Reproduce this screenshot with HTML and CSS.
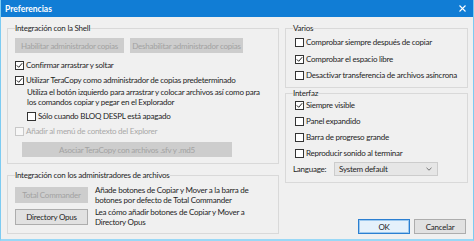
FILE: index.html
```html
<!DOCTYPE html>
<html lang="es">
<head>
<meta charset="utf-8">
<title>Preferencias</title>
<link rel="stylesheet" href="styles.css">
</head>
<body>
<div class="window">
  <div class="titlebar">
    <span class="title">Preferencias</span>
    <svg class="close" width="7" height="7" viewBox="0 0 7 7"><path d="M0.5 0.5 L6.5 6.5 M6.5 0.5 L0.5 6.5" stroke="#fff" stroke-width="1.1" fill="none"/></svg>
  </div>
  <div class="content">
    <div class="col-left">
      <fieldset class="group g-shell">
        <legend>Integración con la Shell</legend>
        <div class="btn-row">
          <div class="btn disabled w-hab">Habilitar administrador copias</div>
          <div class="btn disabled w-deshab">Deshabilitar administrador copias</div>
        </div>
        <div class="check r-confirm"><span class="box"><svg width="7" height="7" viewBox="0 0 7 7"><path d="M0.8 3.4 L2.7 5.3 L6.2 1.2" stroke="#222" stroke-width="1" fill="none"/></svg></span>Confirmar arrastrar y soltar</div>
        <div class="check r-utilizar"><span class="box"><svg width="7" height="7" viewBox="0 0 7 7"><path d="M0.8 3.4 L2.7 5.3 L6.2 1.2" stroke="#222" stroke-width="1" fill="none"/></svg></span>Utilizar TeraCopy como administrador de copias predeterminado</div>
        <div class="desc">Utiliza el botón izquierdo para arrastrar y colocar archivos así como para<br>los comandos copiar y pegar en el Explorador</div>
        <div class="check r-solo"><span class="box"></span>Sólo cuando BLOQ DESPL está apagado</div>
        <div class="check r-anadir disabled"><span class="box"></span>Añadir al menú de contexto del Explorer</div>
        <div class="btn disabled btn-asociar">Asociar TeraCopy con archivos .sfv y .md5</div>
      </fieldset>
      <fieldset class="group g-admin">
        <legend>Integración con los administradores de archivos</legend>
        <div class="tool-row r-tc">
          <div class="btn disabled tool-btn">Total Commander</div>
          <div class="tool-text">Añade botones de Copiar y Mover a la barra de<br>botones por defecto de Total Commander</div>
        </div>
        <div class="tool-row r-do">
          <div class="btn tool-btn">Directory Opus</div>
          <div class="tool-text">Lea cómo añadir botones de Copiar y Mover a<br>Directory Opus</div>
        </div>
      </fieldset>
    </div>
    <div class="col-right">
      <fieldset class="group g-varios">
        <legend>Varios</legend>
        <div class="check v1"><span class="box"></span>Comprobar siempre después de copiar</div>
        <div class="check v2"><span class="box"><svg width="7" height="7" viewBox="0 0 7 7"><path d="M0.8 3.4 L2.7 5.3 L6.2 1.2" stroke="#222" stroke-width="1" fill="none"/></svg></span>Comprobar el espacio libre</div>
        <div class="check v3"><span class="box"></span>Desactivar transferencia de archivos asíncrona</div>
      </fieldset>
      <fieldset class="group g-interfaz">
        <legend>Interfaz</legend>
        <div class="check i1"><span class="box"><svg width="7" height="7" viewBox="0 0 7 7"><path d="M0.8 3.4 L2.7 5.3 L6.2 1.2" stroke="#222" stroke-width="1" fill="none"/></svg></span>Siempre visible</div>
        <div class="check i2"><span class="box"></span>Panel expandido</div>
        <div class="check i2"><span class="box"></span>Barra de progreso grande</div>
        <div class="check i2"><span class="box"></span>Reproducir sonido al terminar</div>
        <div class="lang-row">
          <span class="lang-label">Language:</span>
          <div class="select"><span>System default</span><svg width="6" height="4" viewBox="0 0 6 4"><path d="M0.5 0.8 L3 3.2 L5.5 0.8" stroke="#666" stroke-width="0.9" fill="none"/></svg></div>
        </div>
      </fieldset>
      <div class="dialog-buttons">
        <div class="btn dbtn ok">OK</div>
        <div class="btn dbtn">Cancelar</div>
      </div>
    </div>
  </div>
</div>
</body>
</html>
```

FILE: styles.css
```css
* { box-sizing: border-box; }
html, body { margin: 0; padding: 0; }
body {
  width: 474px;
  height: 241px;
  overflow: hidden;
  font-family: Lato, "Noto Sans", sans-serif;
  font-size: 8px;
  letter-spacing: -0.24px;
  color: #1e1e1e;
  background: #f0f0f0;
}
.window {
  width: 474px;
  height: 241px;
  display: flex;
  flex-direction: column;
  background: #f0f0f0;
  border-left: 1px solid #7ccbf2;
  border-right: 1px solid #7ccbf2;
  border-bottom: 2px solid #9ad8f6;
}
.titlebar {
  height: 17px;
  flex: none;
  background: #117dd5;
  color: #fff;
  display: flex;
  align-items: center;
  justify-content: space-between;
  padding: 0 7px 0 4px;
}
.title { font-size: 8.5px; font-weight: 700; letter-spacing: 0; }
.close { display: block; }

.content {
  flex: 1;
  display: flex;
  gap: 6px;
  padding: 6px 5px 6px 6px;
}
.col-left { width: 272px; display: flex; flex-direction: column; gap: 6px; }
.col-right { width: 183px; display: flex; flex-direction: column; }

fieldset.group {
  margin: 0;
  min-width: 0;
  border: 1px solid #d9d9d9;
  padding: 0 7px 6px;
}
legend {
  padding: 0;
  line-height: 10px;
  font-size: 8px;
  color: #1e1e1e;
}

.btn {
  display: flex;
  align-items: center;
  justify-content: center;
  height: 15px;
  border: 1px solid #adadad;
  background: #e1e1e1;
  white-space: nowrap;
  color: #1e1e1e;
}
.btn.disabled {
  background: #cdcdcd;
  border-color: #cdcdcd;
  color: #a2a2a2;
}
.btn-row { display: flex; gap: 6px; margin-top: 5px; }
.w-hab { width: 109px; }
.w-deshab { width: 113px; }

.check {
  display: flex;
  align-items: center;
  height: 11px;
  line-height: 11px;
  white-space: nowrap;
}
.box {
  width: 9px;
  height: 9px;
  flex: none;
  border: 1px solid #333;
  background: #fff;
  margin-right: 2px;
  display: flex;
  align-items: center;
  justify-content: center;
}
.box svg { display: block; }
.check.disabled { color: #a8a8a8; }
.check.disabled .box { border-color: #c8c8c8; background: #f7f7f7; }

.r-confirm { margin-top: 7px; }
.r-utilizar { margin-top: 4px; }
.desc { margin-top: 1px; padding-left: 12px; line-height: 10px; white-space: nowrap; }
.r-solo { margin-top: 4px; padding-left: 12px; }
.r-anadir { margin-top: 4px; }
.btn-asociar { margin-top: 5px; margin-left: 7px; width: 210px; }

.g-admin { padding-bottom: 4px; }
.tool-row { display: flex; align-items: center; height: 20px; }
.r-tc { margin-top: 5px; }
.r-do { margin-top: 2px; }
.tool-btn { width: 73px; height: 16px; flex: none; }
.tool-text { margin-left: 7px; line-height: 10px; white-space: nowrap; }

.g-varios { padding-bottom: 4px; }
.g-varios .check, .g-interfaz .check { margin-left: 2px; }
.v1 { margin-top: 4px; }
.v2 { margin-top: 6px; }
.v3 { margin-top: 5px; }

.g-interfaz { margin-top: 4px; padding-bottom: 3px; }
.i1 { margin-top: 2px; }
.i2 { margin-top: 5px; }
.lang-row { display: flex; align-items: center; margin-top: 3px; height: 14px; }
.lang-label { width: 41px; flex: none; }
.select {
  width: 104px;
  height: 14px;
  border: 1px solid #cccccc;
  background: #e6e6e6;
  display: flex;
  align-items: center;
  justify-content: space-between;
  padding: 0 5px 0 4px;
}
.select svg { display: block; }

.dialog-buttons {
  margin-top: auto;
  display: flex;
  justify-content: flex-end;
  gap: 4px;
  margin-right: 2px;
}
.dbtn { width: 52px; height: 15px; }
.ok { border-color: #2b7fd1; background: #e5f1fb; box-shadow: inset 0 0 0 1px #9cc8ee; }
```
